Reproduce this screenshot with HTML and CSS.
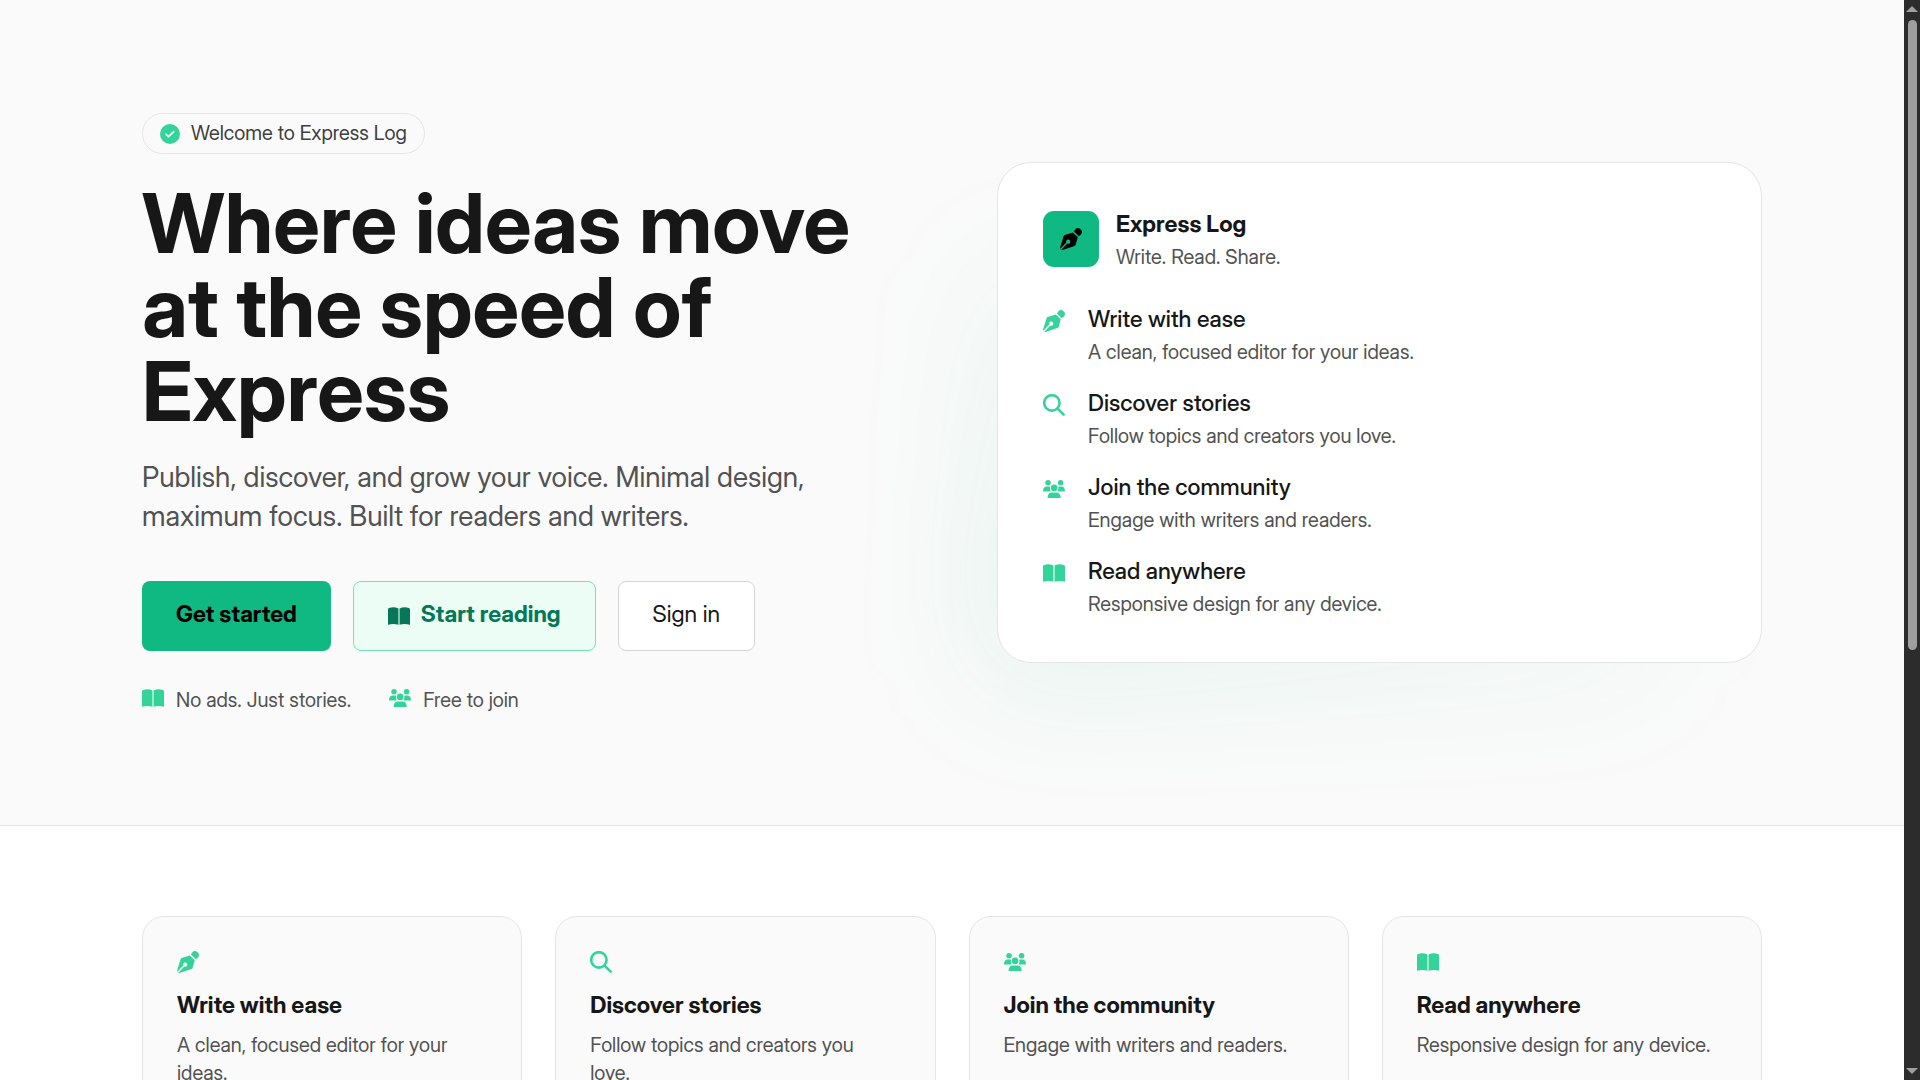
FILE: index.html
```html
<!DOCTYPE html>
<html lang="en">
<head>
<meta charset="utf-8">
<meta name="viewport" content="width=device-width, initial-scale=1">
<title>Express Log</title>
<link rel="stylesheet" href="styles.css">
</head>
<body>
<svg class="sprite" aria-hidden="true">
  <symbol id="pen" viewBox="0 0 24 24"><path fill-rule="evenodd" d="M5 7.600 14 4.900 19.400 10.200 17.100 18.200Q16.800 19.300 15.800 19.600L2.800 23.900Q1.800 24.100 1.500 23.600L8 17A2.300 2.300 0 1 0 6.900 15.900L.4 22.500Q-.1 22.100.1 21.200L4 8.700Q4.300 7.800 5 7.600Z"/><path d="M15.200 3.800 16.600 1.600A3.700 3.700 0 0 1 22.700 1.700 3.700 3.700 0 0 1 22.800 7.200L20.500 9.100Z"/></symbol>
  <symbol id="search" viewBox="0 0 24 24"><circle cx="9.700" cy="9.700" r="8.400" fill="none" stroke="currentColor" stroke-width="2.800"/><path d="m16 16 6.500 6.500" fill="none" stroke="currentColor" stroke-width="2.800" stroke-linecap="round"/></symbol>
  <symbol id="users" viewBox="0 0 24 24"><circle cx="5.500" cy="5.200" r="3"/><circle cx="19.200" cy="5.200" r="3"/><circle cx="12.200" cy="10.800" r="3.600"/><path d="M0 14.600C0 11.400 1.500 9.300 4 9.300H7.500Q8 9.300 7.700 10.200 7.200 12.800 8.400 14.600ZM24 14.600C24 11.400 22.500 9.300 20 9.300H17Q16.500 9.300 16.700 10.200 17.200 12.800 16 14.600ZM5 21.800C5 18 6.800 15.900 9.400 15.900H15C17.600 15.900 19.300 18 19.300 21.800Z"/></symbol>
  <symbol id="book" viewBox="0 0 24 24"><path d="M11.400 3.800V21.600Q6 19.600 0 21.600V4.800Q0 3.500 1.200 3.200 6.600 1.600 11.400 3.800ZM12.600 3.800V21.600Q18 19.600 24 21.600V4.800Q24 3.500 22.800 3.200 17.400 1.600 12.600 3.800Z"/></symbol>
  <symbol id="check" viewBox="0 0 20 20"><circle cx="10" cy="10" r="10"/><path d="m6 10.200 2.500 2.500 5.300-5" fill="none" stroke="#fff" stroke-width="1.600" stroke-linecap="round" stroke-linejoin="round"/></symbol>
</svg>
<main class="page">
  <section class="hero">
    <div class="container hero-grid">
      <div class="intro">
        <p class="pill"><svg class="pill-icon"><use href="#check"/></svg>Welcome to Express Log</p>
        <h1>Where ideas move at the speed of Express</h1>
        <p class="lead">Publish, discover, and grow your voice. Minimal design, maximum focus. Built for readers and writers.</p>
        <div class="actions">
          <button type="button" class="button primary">Get started</button>
          <button type="button" class="button soft"><svg class="icon"><use href="#book"/></svg>Start reading</button>
          <button type="button" class="button plain">Sign in</button>
        </div>
        <ul class="notes">
          <li><svg class="icon"><use href="#book"/></svg>No ads. Just stories.</li>
          <li><svg class="icon"><use href="#users"/></svg>Free to join</li>
        </ul>
      </div>
      <div class="showcase">
        <div class="glow"></div>
        <div class="panel">
          <div class="brand">
            <div class="logo"><svg class="icon"><use href="#pen"/></svg></div>
            <div class="pair"><p class="brand-name">Express Log</p><p class="small">Write. Read. Share.</p></div>
          </div>
          <ul class="benefits">
            <li><svg class="icon"><use href="#pen"/></svg><div class="pair"><p class="title">Write with ease</p><p class="small">A clean, focused editor for your ideas.</p></div></li>
            <li><svg class="icon"><use href="#search"/></svg><div class="pair"><p class="title">Discover stories</p><p class="small">Follow topics and creators you love.</p></div></li>
            <li><svg class="icon"><use href="#users"/></svg><div class="pair"><p class="title">Join the community</p><p class="small">Engage with writers and readers.</p></div></li>
            <li><svg class="icon"><use href="#book"/></svg><div class="pair"><p class="title">Read anywhere</p><p class="small">Responsive design for any device.</p></div></li>
          </ul>
        </div>
      </div>
    </div>
  </section>
  <section class="features">
    <div class="container cards">
      <article class="card"><svg class="icon"><use href="#pen"/></svg><h2>Write with ease</h2><p class="small">A clean, focused editor for your ideas.</p></article>
      <article class="card"><svg class="icon"><use href="#search"/></svg><h2>Discover stories</h2><p class="small">Follow topics and creators you love.</p></article>
      <article class="card"><svg class="icon"><use href="#users"/></svg><h2>Join the community</h2><p class="small">Engage with writers and readers.</p></article>
      <article class="card"><svg class="icon"><use href="#book"/></svg><h2>Read anywhere</h2><p class="small">Responsive design for any device.</p></article>
    </div>
  </section>
</main>
<div class="scrollbar" aria-hidden="true">
  <svg class="arrow" viewBox="0 0 12 6"><path d="M6 0 12 6H0Z"/></svg>
  <div class="track"><div class="thumb"></div></div>
  <svg class="arrow" viewBox="0 0 12 6"><path d="M0 0H12L6 6Z"/></svg>
</div>
</body>
</html>
```
FILE: styles.css
```css
* { box-sizing: border-box; }
body {
  margin: 0;
  height: 100vh;
  display: flex;
  overflow: hidden;
  background: #fff;
  color: #171717;
  font-family: "Inter Display", Inter, "Liberation Sans", sans-serif;
  font-size: 23px;
  line-height: 34px;
}
h1, h2, p, ul { margin: 0; padding: 0; }
ul { list-style: none; }
svg { display: block; fill: currentColor; flex: none; }
.sprite { display: none; }
.icon { width: 22px; height: 22px; color: #34d399; }

.page { flex: 1; min-width: 0; overflow-y: auto; scrollbar-width: none; }
.container { max-width: 1620px; margin: 0 auto; }

.hero {
  position: relative;
  overflow: hidden;
  padding: 113px 34px 112px;
  background: #fafafa;
  border-bottom: 1px solid #e5e5e5;
}
.hero-grid {
  display: grid;
  grid-template-columns: repeat(2, minmax(0, 1fr));
  gap: 90px;
  align-items: center;
}
.intro { display: flex; flex-direction: column; align-items: flex-start; }
.pill, .notes, .small { font-size: 20px; }
.pill {
  display: flex;
  align-items: center;
  gap: 11px;
  padding: 5px 17px;
  border: 1px solid #e5e5e5;
  border-radius: 40px;
  color: #404040;
  line-height: 29px;
}
.pill-icon { width: 20px; height: 20px; color: #34d399; }
h1 {
  margin-top: 27px;
  font-size: 83px;
  line-height: 84px;
  font-weight: 700;
}
.lead { margin-top: 25px; color: #525252; font-size: 28px; line-height: 39px; }
.actions { display: flex; gap: 22px; margin-top: 45px; }
.button {
  display: flex;
  align-items: center;
  gap: 11px;
  padding: 15px 34px 19px;
  border: 1px solid transparent;
  border-radius: 8px;
  font: inherit;
}
.primary { border: 0; background: #10b981; color: #000; font-weight: 700; }
.soft { background: #ecfdf5; border-color: #6ee7b7; color: #047857; font-weight: 700; }
.soft .icon { margin-top: 4px; color: inherit; }
.plain { background: #fff; border-color: #d4d4d4; color: #171717; }
.notes { display: flex; gap: 38px; margin-top: 36px; color: #525252; line-height: 26px; }
.notes li { display: flex; gap: 12px; }

.showcase { position: relative; margin-bottom: 2px; }
.glow {
  position: absolute;
  inset: 90px 90px -22px -22px;
  background: linear-gradient(to top right, rgba(16, 185, 129, 0.1), transparent 80%);
  border-radius: 45px;
  filter: blur(60px);
}
.panel {
  position: relative;
  padding: 44px 45px;
  background: #fff;
  border: 1px solid #e5e5e5;
  border-radius: 34px;
}
.brand { display: flex; align-items: center; gap: 17px; margin-bottom: 31px; }
.logo { display: grid; place-items: center; width: 56px; height: 56px; border-radius: 11px; background: #10b981; }
.logo .icon { color: #000; }
.pair { display: grid; gap: 2px; }
.brand-name { font-weight: 700; }
.small { color: #525252; line-height: 28px; }
.benefits { display: grid; gap: 20px; }
.benefits li { display: flex; gap: 23px; }
.benefits .icon { margin-top: 8px; }
.title { font-weight: 500; }

.features { padding: 90px 34px; }
.cards { display: grid; grid-template-columns: repeat(4, minmax(0, 1fr)); gap: 33px; }
.card { padding: 34px 40px 34px 34px; background: #fafafa; border: 1px solid #e5e5e5; border-radius: 22px; }
.card h2 { margin: 15px 0 9px; font-size: 23px; line-height: 34px; font-weight: 700; }

.scrollbar {
  display: flex;
  flex-direction: column;
  align-items: center;
  gap: 8px;
  width: 16px;
  padding: 6px 0;
  background: #2c2c2c;
  color: #9f9f9f;
}
.arrow { width: 12px; height: 6px; }
.track { flex: 1; }
.thumb { width: 9px; height: 630px; max-height: 61%; border-radius: 5px; background: #9f9f9f; }
```
